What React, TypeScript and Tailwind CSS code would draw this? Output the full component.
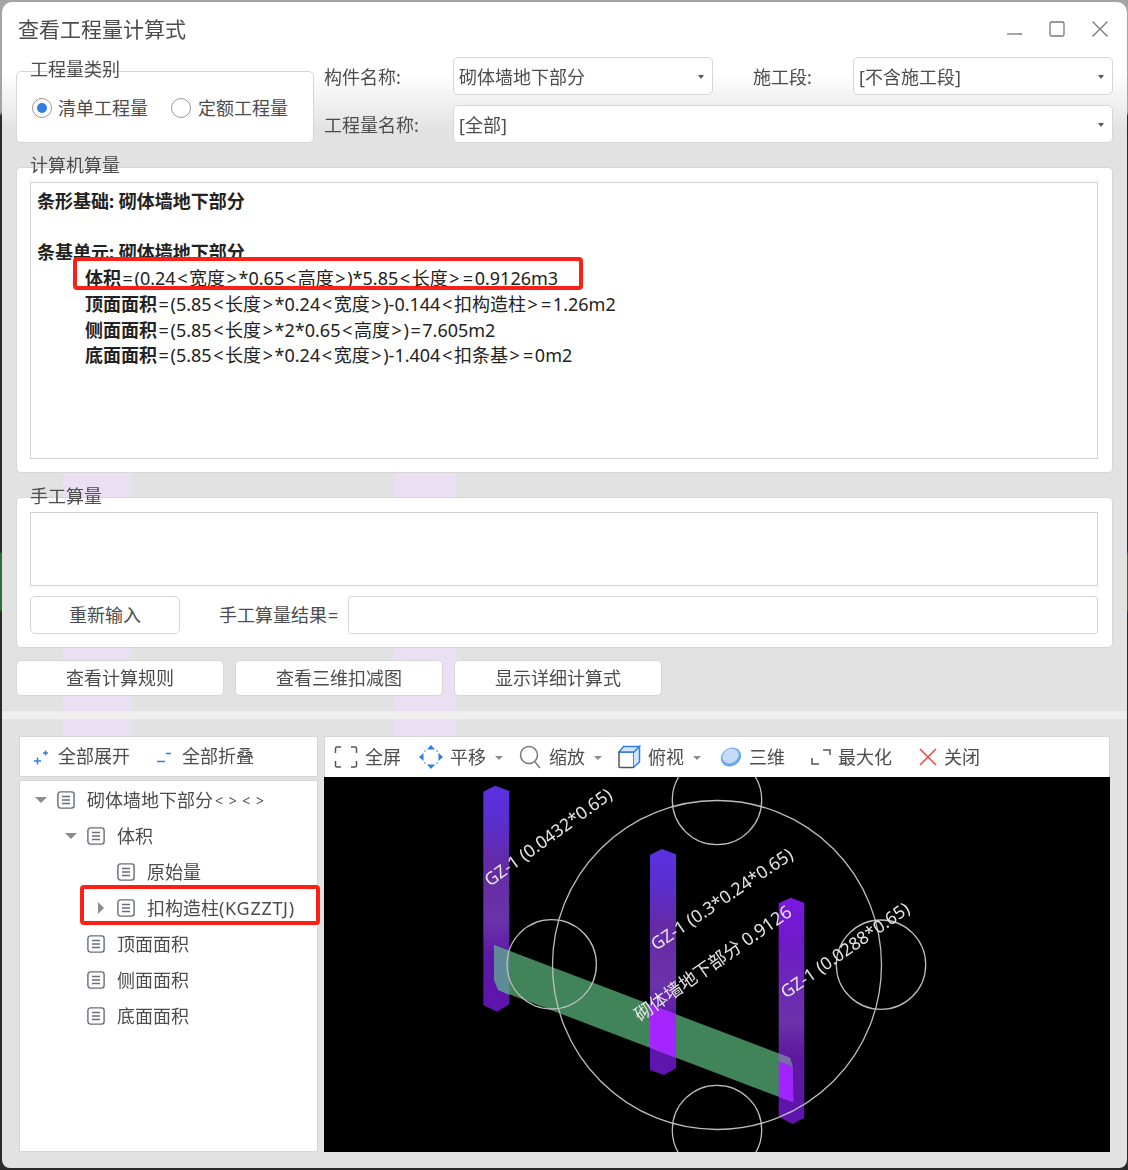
import React from 'react';

const DocIcon = () => (
  <svg width="18" height="18" viewBox="0 0 18 18" fill="none" stroke="#666c78" strokeWidth="1.4" className="shrink-0">
    <rect x="0.9" y="0.9" width="16.2" height="16.2" rx="2.5" />
    <path d="M5 5.5h8M5 9h8M5 12.5h8" />
  </svg>
);

const Caret = () => <span className="ml-[9px] mt-[1px] w-0 h-0 border-x-[4px] border-x-transparent border-t-[4px] border-t-[#8a8a8a]" />;

const Combo = ({ text, className }: { text?: string; className: string }) => (
  <div className={`h-[38px] flex items-center justify-between pl-[5px] pr-[8px] pt-[2px] bg-white border border-[#d6d6d6] rounded-[5px] ${className}`}>
    <span>{text}</span>
    <span className="w-0 h-0 border-x-[3.5px] border-x-transparent border-t-[4px] border-t-[#555c68]" />
  </div>
);

const Legend = ({ children, className }: { children: React.ReactNode; className: string }) => (
  <span className={`absolute left-[13px] leading-[26px] text-[#4c4c4c] ${className}`}>{children}</span>
);

const Button = ({ children, className }: { children: React.ReactNode; className: string }) => (
  <button className={`flex items-center justify-center bg-white border border-[#d6d6d6] rounded-[5px] text-[#4c4c4c] ${className}`}>{children}</button>
);

// the original font sets = < > wider than Noto Sans does
const Formula = ({ name, expr }: { name: string; expr: string }) => (
  <div className="ml-[48px]">
    <span className="font-bold text-[#222]">{name}</span>
    {expr.split(/([=<>])/).map((part, i) =>
      /^[=<>]$/.test(part) ? <span key={i} className="px-[1.6px]">{part}</span> : <span key={i}>{part}</span>
    )}
  </div>
);

const rows = [
  { pad: 'pl-[15px]', arrow: 'down', text: '砌体墙地下部分', suffix: '< > < >' },
  { pad: 'pl-[45px]', arrow: 'down', text: '体积' },
  { pad: 'pl-[75px]', arrow: 'none', text: '原始量' },
  { pad: 'pl-[75px]', arrow: 'right', text: '扣构造柱', latin: '(KGZZTJ)' },
  { pad: 'pl-[45px]', arrow: 'none', text: '顶面面积' },
  { pad: 'pl-[45px]', arrow: 'none', text: '侧面面积' },
  { pad: 'pl-[45px]', arrow: 'none', text: '底面面积' },
];

const TreeRow = ({ pad, arrow, text, suffix, latin }: { pad: string; arrow: string; text: string; suffix?: string; latin?: string }) => (
  <div className={`h-[36px] flex items-center text-[#4c4c4c] ${pad}`}>
    <span className="w-[22px] flex justify-start">
      {arrow === 'down' && <span className="w-0 h-0 border-x-[6px] border-x-transparent border-t-[6px] border-t-[#8c8c8c]" />}
      {arrow === 'right' && <span className="ml-[3px] w-0 h-0 border-y-[6px] border-y-transparent border-l-[6px] border-l-[#8c8c8c]" />}
    </span>
    <DocIcon />
    <span className="ml-[12px] whitespace-nowrap">{text}</span>
    {latin && <span className="tracking-[0.7px] whitespace-nowrap">{latin}</span>}
    {suffix && <span className="ml-[2px] text-[14px] tracking-[1px]">{suffix}</span>}
  </div>
);

const Tool = ({ icon, label, caret, className }: { icon: React.ReactNode; label: string; caret?: boolean; className: string }) => (
  <div className={`flex items-center shrink-0 text-[#4c4c4c] ${className}`}>
    {icon}
    <span className="ml-[7px] mt-[1px] whitespace-nowrap">{label}</span>
    {caret && <Caret />}
  </div>
);

const purple = 'url(#col)';

const Scene = () => (
  <svg viewBox="-1 0 786 375" className="block w-full h-full">
    <defs>
      <linearGradient id="col" x1="0" y1="0" x2="0" y2="1">
        <stop offset="0" stopColor="#5c30e0" />
        <stop offset="0.15" stopColor="#5a2fd0" />
        <stop offset="0.35" stopColor="#652aa5" />
        <stop offset="0.6" stopColor="#6a33a8" />
        <stop offset="0.75" stopColor="#5d18a8" />
        <stop offset="1" stopColor="#5f14ae" />
      </linearGradient>
      <linearGradient id="col3" x1="0" y1="0" x2="0" y2="1">
        <stop offset="0" stopColor="#7a18e0" />
        <stop offset="0.2" stopColor="#6f1ac8" />
        <stop offset="0.55" stopColor="#6a33a8" />
        <stop offset="0.7" stopColor="#5d18a0" />
        <stop offset="1" stopColor="#5f14ae" />
      </linearGradient>
    </defs>
    <polygon points="158.3,14.7 170,8.7 184.3,14 184.3,227.3 172.3,234.7 158.3,228" fill={purple} />
    <polygon points="325,78 336.7,72 351,77.3 351,291.3 339,298 325,293" fill={purple} />
    <polygon points="453.7,126.3 465.7,120.7 479.3,125.7 479.3,340.7 467.7,347 453.7,339.7" fill="url(#col3)" />
    <polygon points="169,168 465,280.7 467.7,289.7 468.3,325.3 173.3,213 169,203" fill="#42845a" />
    <polygon points="169,168 184.3,173.8 184.3,218 173.3,213 169,203" fill="#5f8a98" />
    <polygon points="325,227.3 351,237.3 351,280.7 325,270.7" fill="#a425ff" />
    <polygon points="453.7,276.3 465,280.7 467.7,289.7 453.7,284" fill="#7d6aa8" />
    <polygon points="453.7,284 467.7,289.7 468.3,325.3 453.7,319.7" fill="#a025ff" />
    <g fill="none" stroke="#bdbdbd" strokeWidth="1.3">
      <circle cx="392" cy="188" r="164.5" />
      <circle cx="392" cy="23" r="44.7" />
      <circle cx="392" cy="353" r="44.7" />
      <circle cx="226.7" cy="187.3" r="44.7" />
      <circle cx="556" cy="187.7" r="44.7" />
    </g>
    <g fill="#e6e6e6" fontSize="17.5">
      <text transform="translate(165 110) rotate(-36)">GZ-1 (0.0432*0.65)</text>
      <text transform="translate(331 174) rotate(-34)">GZ-1 (0.3*0.24*0.65)</text>
      <text transform="translate(461 222) rotate(-35)">GZ-1 (0.0288*0.65)</text>
      <text transform="translate(315 245) rotate(-35)" fontSize="18">砌体墙地下部分 0.9126</text>
    </g>
  </svg>
);

export default function App() {
  return (
    <div className="relative w-[1128px] h-[1170px] overflow-hidden pl-[2px] pt-[2px] bg-[linear-gradient(180deg,#a4a4a4_0,#a4a4a4_112px,#2b2b2b_116px,#2b2b2b_552px,#2e6b35_554px,#2e6b35_610px,#2b2b2b_612px)] font-['Noto_Sans','Noto_Sans_CJK_SC',sans-serif] text-[18px]">
      <div className="w-[1125px] h-[1166px] blur-[0.4px] rounded-t-[10px] rounded-b-[8px] overflow-hidden bg-[linear-gradient(180deg,#ffffff_0,#ffffff_70px,#e2e2e2_130px)]">
        {/* title bar */}
        <div className="relative h-[55px] flex items-start pl-[16px] pt-[12px]">
          <span className="text-[21px] leading-[30px] text-[#4c4c4c]">查看工程量计算式</span>
          <div className="ml-auto mr-[19px] mt-[7px] flex items-start gap-[27px]">
            <svg width="16" height="16" viewBox="0 0 16 16" stroke="#777" strokeWidth="1.3" fill="none"><path d="M1 13h15" /></svg>
            <svg width="16" height="16" viewBox="0 0 16 16" stroke="#777" strokeWidth="1.3" fill="none"><rect x="1" y="1" width="14" height="14" rx="1.5" /></svg>
            <svg width="16" height="16" viewBox="0 0 16 16" stroke="#777" strokeWidth="1.3" fill="none"><path d="M0.5 0.5l15 15M15.5 0.5l-15 15" /></svg>
          </div>
        </div>

        <div className="pl-[14px] pr-[14px]">
          {/* filters */}
          <div className="flex text-[#4c4c4c]">
            <div className="relative mt-[14px] w-[298px] h-[72px] shrink-0 bg-white border border-[#d6d6d6] rounded-[5px]">
              <Legend className="-top-[16px]">工程量类别</Legend>
              <div className="flex items-center pl-[15px] pt-[21px]">
                <span className="w-[20px] h-[20px] rounded-full border border-[#9a9a9a] flex items-center justify-center">
                  <span className="w-[10px] h-[10px] rounded-full bg-[#2f7fe0]" />
                </span>
                <span className="ml-[6px] mt-[2px]">清单工程量</span>
                <span className="ml-[23px] w-[20px] h-[20px] rounded-full border border-[#9a9a9a]" />
                <span className="ml-[7px] mt-[2px]">定额工程量</span>
              </div>
            </div>
            <div className="ml-[10px] flex-1 flex flex-col gap-[10px]">
              <div className="flex items-center">
                <span className="w-[129px] mt-[2px]">构件名称:</span>
                <Combo text="砌体墙地下部分" className="w-[260px]" />
                <span className="ml-[40px] w-[100px] mt-[2px]">施工段:</span>
                <Combo text="[不含施工段]" className="w-[260px]" />
              </div>
              <div className="flex items-center">
                <span className="w-[129px] mt-[2px]">工程量名称:</span>
                <Combo text="[全部]" className="w-[660px]" />
              </div>
            </div>
          </div>

          {/* computed quantity */}
          <div className="relative mt-[24px] h-[306px] bg-white border border-[#d6d6d6] rounded-[5px] pl-[13px] pr-[14px] pt-[14px]">
            <Legend className="-top-[16px]">计算机算量</Legend>
            <div className="h-[277px] border border-[#d0d0d0] pl-[6px] pt-[6px] leading-[25.7px] text-[#222]">
              <div className="font-bold text-[#222]">条形基础: 砌体墙地下部分</div>
              <div className="h-[25.7px]" />
              <div className="font-bold text-[#222]">条基单元: 砌体墙地下部分</div>
              <Formula name="体积" expr="=(0.24<宽度>*0.65<高度>)*5.85<长度>=0.9126m3" />
              <Formula name="顶面面积" expr="=(5.85<长度>*0.24<宽度>)-0.144<扣构造柱>=1.26m2" />
              <Formula name="侧面面积" expr="=(5.85<长度>*2*0.65<高度>)=7.605m2" />
              <Formula name="底面面积" expr="=(5.85<长度>*0.24<宽度>)-1.404<扣条基>=0m2" />
            </div>
          </div>
        </div>

        {/* lower part, the page behind tints the glass here */}
        <div className="pt-[24px] bg-[linear-gradient(90deg,transparent_60px,#ebe0f3_62px,#ebe0f3_127px,transparent_129px,transparent_391px,#ebe0f3_393px,#ebe0f3_453px,transparent_455px)]">
          <div className="pl-[14px] pr-[14px]">
            <div className="relative h-[151px] bg-white border border-[#d6d6d6] rounded-[5px] pl-[13px] pr-[14px] pt-[14px]">
              <Legend className="-top-[15px]">手工算量</Legend>
              <div className="h-[74px] border border-[#d0d0d0]" />
              <div className="mt-[10px] flex items-center">
                <Button className="w-[150px] h-[38px]">重新输入</Button>
                <span className="ml-[39px] w-[129px] whitespace-nowrap text-[#4c4c4c]">手工算量结果<span className="ml-[1px]">=</span></span>
                <div className="flex-1 h-[38px] border border-[#d6d6d6] rounded-[3px]" />
              </div>
            </div>
            <div className="mt-[12px] flex gap-[11px]">
              <Button className="w-[208px] h-[36px]">查看计算规则</Button>
              <Button className="w-[208px] h-[36px]">查看三维扣减图</Button>
              <Button className="w-[208px] h-[36px]">显示详细计算式</Button>
            </div>
          </div>
          <div className="mt-[15px] h-[8px] bg-[#efefef]" />
          <div className="h-[17px]" />
        </div>

        {/* tree and 3D view */}
        <div className="flex pl-[17px] gap-[6px]">
          <div className="w-[299px] h-[416px] shrink-0 flex flex-col gap-[3px]">
            <div className="h-[41px] flex items-center bg-white border border-[#d6d6d6] text-[#4c4c4c]">
              <svg width="16" height="16" viewBox="0 0 16 16" stroke="#2b7fe6" strokeWidth="1.5" fill="none" className="ml-[13px]">
                <path d="M1 12h7M4.500 8.500v7M10 4h5M12.500 1.500v5" />
              </svg>
              <span className="ml-[9px]">全部展开</span>
              <svg width="16" height="16" viewBox="0 0 16 16" stroke="#2b7fe6" strokeWidth="1.5" fill="none" className="ml-[26px]">
                <path d="M1 12.500h8M10 4.500h5" />
              </svg>
              <span className="ml-[10px]">全部折叠</span>
            </div>
            <div className="flex-1 bg-white border border-[#d6d6d6] pt-[1px]">
              {rows.map(r => <TreeRow key={r.text} {...r} />)}
            </div>
          </div>

          <div className="w-[786px] h-[416px] flex flex-col">
            <div className="h-[41px] shrink-0 flex items-center bg-white border-t border-x border-[#d6d6d6]">
              <Tool className="ml-[9px]" label="全屏" icon={
                <svg width="24" height="24" viewBox="0 0 24 24" stroke="#555" strokeWidth="1.5" fill="none"><path d="M7 2H3Q1.500 2 1.500 3.500V8M17 2h4Q22.500 2 22.500 3.500V8M7 22H3Q1.500 22 1.500 20.500V16M17 22h4Q22.500 22 22.500 20.500V16" /></svg>
              } />
              <Tool className="ml-[18px]" label="平移" caret icon={
                <svg width="24" height="24" viewBox="0 0 24 24" fill="#2b7fe6" stroke="none"><path d="M12 0l4 4.500h-8zM12 24l4-4.500h-8zM0 12l4.500-4v8zM24 12l-4.500-4v8z" /><circle cx="6" cy="6" r="0.8" /><circle cx="18" cy="6" r="0.8" /><circle cx="6" cy="18" r="0.8" /><circle cx="18" cy="18" r="0.8" /></svg>
              } />
              <Tool className="ml-[16px]" label="缩放" caret icon={
                <svg width="23" height="24" viewBox="0 0 23 24" stroke="#777" strokeWidth="1.5" fill="none"><circle cx="10" cy="10" r="8.500" /><path d="M16 17l5 6" /></svg>
              } />
              <Tool className="ml-[15px]" label="俯视" caret icon={
                <svg width="24" height="24" viewBox="0 0 24 24" fill="none" strokeWidth="1.5"><path d="M2 7h15v14.500q0 1-1 1H3q-1 0-1-1z" stroke="#555" /><path d="M2 7l4.500-5.500H22.500L17 7zM17 7l5.500-5.500V17L17 22" stroke="#2b7fe6" fill="#d4e6fb" /></svg>
              } />
              <Tool className="ml-[19px]" label="三维" icon={
                <svg width="22" height="22" viewBox="0 0 22 22"><ellipse cx="11" cy="11" rx="10.500" ry="9" fill="#6aa6ee" transform="rotate(-30 11 11)" /><ellipse cx="10.500" cy="10" rx="8.500" ry="7" fill="#c4dcf8" transform="rotate(-30 10.500 10)" /></svg>
              } />
              <Tool className="ml-[26px]" label="最大化" icon={
                <svg width="20" height="20" viewBox="0 0 20 20" stroke="#555" strokeWidth="1.5" fill="none"><path d="M12 3h7v5M1 11v6h7" /></svg>
              } />
              <Tool className="ml-[27px]" label="关闭" icon={
                <svg width="18" height="18" viewBox="0 0 18 18" stroke="#ef4a48" strokeWidth="1.6" fill="none"><path d="M1 1l16 16M17 1L1 17" /></svg>
              } />
            </div>
            <div className="flex-1 bg-black">
              <Scene />
            </div>
          </div>
        </div>
      </div>

      {/* red annotation boxes drawn over the screenshot */}
      <div className="absolute left-[73px] top-[257px] w-[510px] h-[33px] border-[4px] border-[#ff2015] rounded-[4px]" />
      <div className="absolute left-[80px] top-[885px] w-[240px] h-[40px] border-[4px] border-[#ff2015] rounded-[4px]" />
    </div>
  );
}
